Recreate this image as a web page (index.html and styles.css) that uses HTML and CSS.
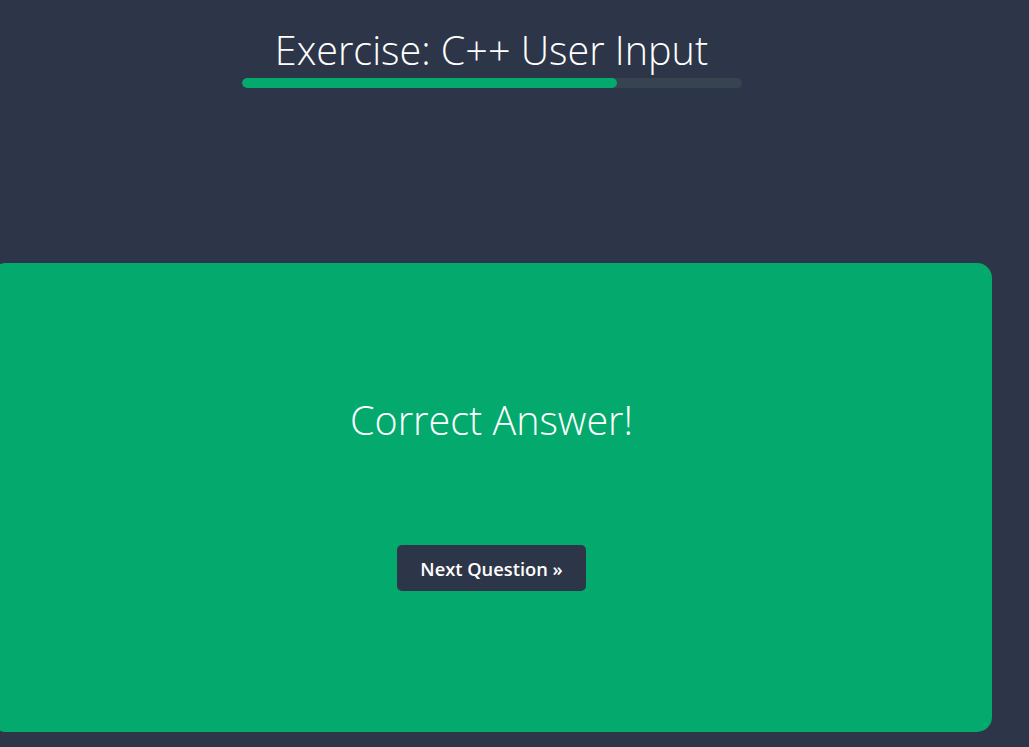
FILE: index.html
```html
<!DOCTYPE html>
<html lang="en">
<head>
<meta charset="utf-8">
<title>Exercise: C++ User Input</title>
<link rel="stylesheet" href="styles.css">
</head>
<body>
<div class="page">
  <header class="head">
    <h1 class="title">Exercise: C++ User Input</h1>
    <div class="progress"><div class="progress-fill" style="width:75%"></div></div>
  </header>
  <section class="result">
    <h2 class="result-text">Correct Answer!</h2>
    <button class="next-btn">Next Question »</button>
  </section>
</div>
</body>
</html>
```
FILE: styles.css
```css
html, body {
  margin: 0;
  padding: 0;
  background: #2d3648;
  overflow: hidden;
}
body {
  font-family: "Open Sans", "Noto Sans", sans-serif;
  color: #fff;
  height: 747px;
}
.page {
  width: 1001px;
  margin-left: -9px;
}
.head {
  display: flex;
  flex-direction: column;
  align-items: center;
  padding-top: 26px;
}
.title {
  margin: 0;
  font-weight: 300;
  font-size: 39.5px;
  line-height: 48px;
  letter-spacing: 0;
}
.progress {
  width: 500px;
  height: 10px;
  border-radius: 5px;
  background: #37434f;
  margin-top: 4px;
  overflow: hidden;
}
.progress-fill {
  height: 100%;
  background: #04aa6d;
  border-radius: 5px;
}
.result {
  margin-top: 175px;
  height: 469px;
  background: #04aa6d;
  border-radius: 15px;
  display: flex;
  flex-direction: column;
  align-items: center;
  box-sizing: border-box;
  padding-top: 132px;
}
.result-text {
  margin: 0;
  font-weight: 300;
  font-size: 39.5px;
  line-height: 50px;
}
.next-btn {
  margin-top: 100px;
  width: 189px;
  height: 46px;
  border: 0;
  border-radius: 5px;
  background: #2d3648;
  color: #fff;
  font-family: "Open Sans", "Noto Sans", sans-serif;
  font-weight: 600;
  font-size: 18.3px;
  cursor: pointer;
}
```
